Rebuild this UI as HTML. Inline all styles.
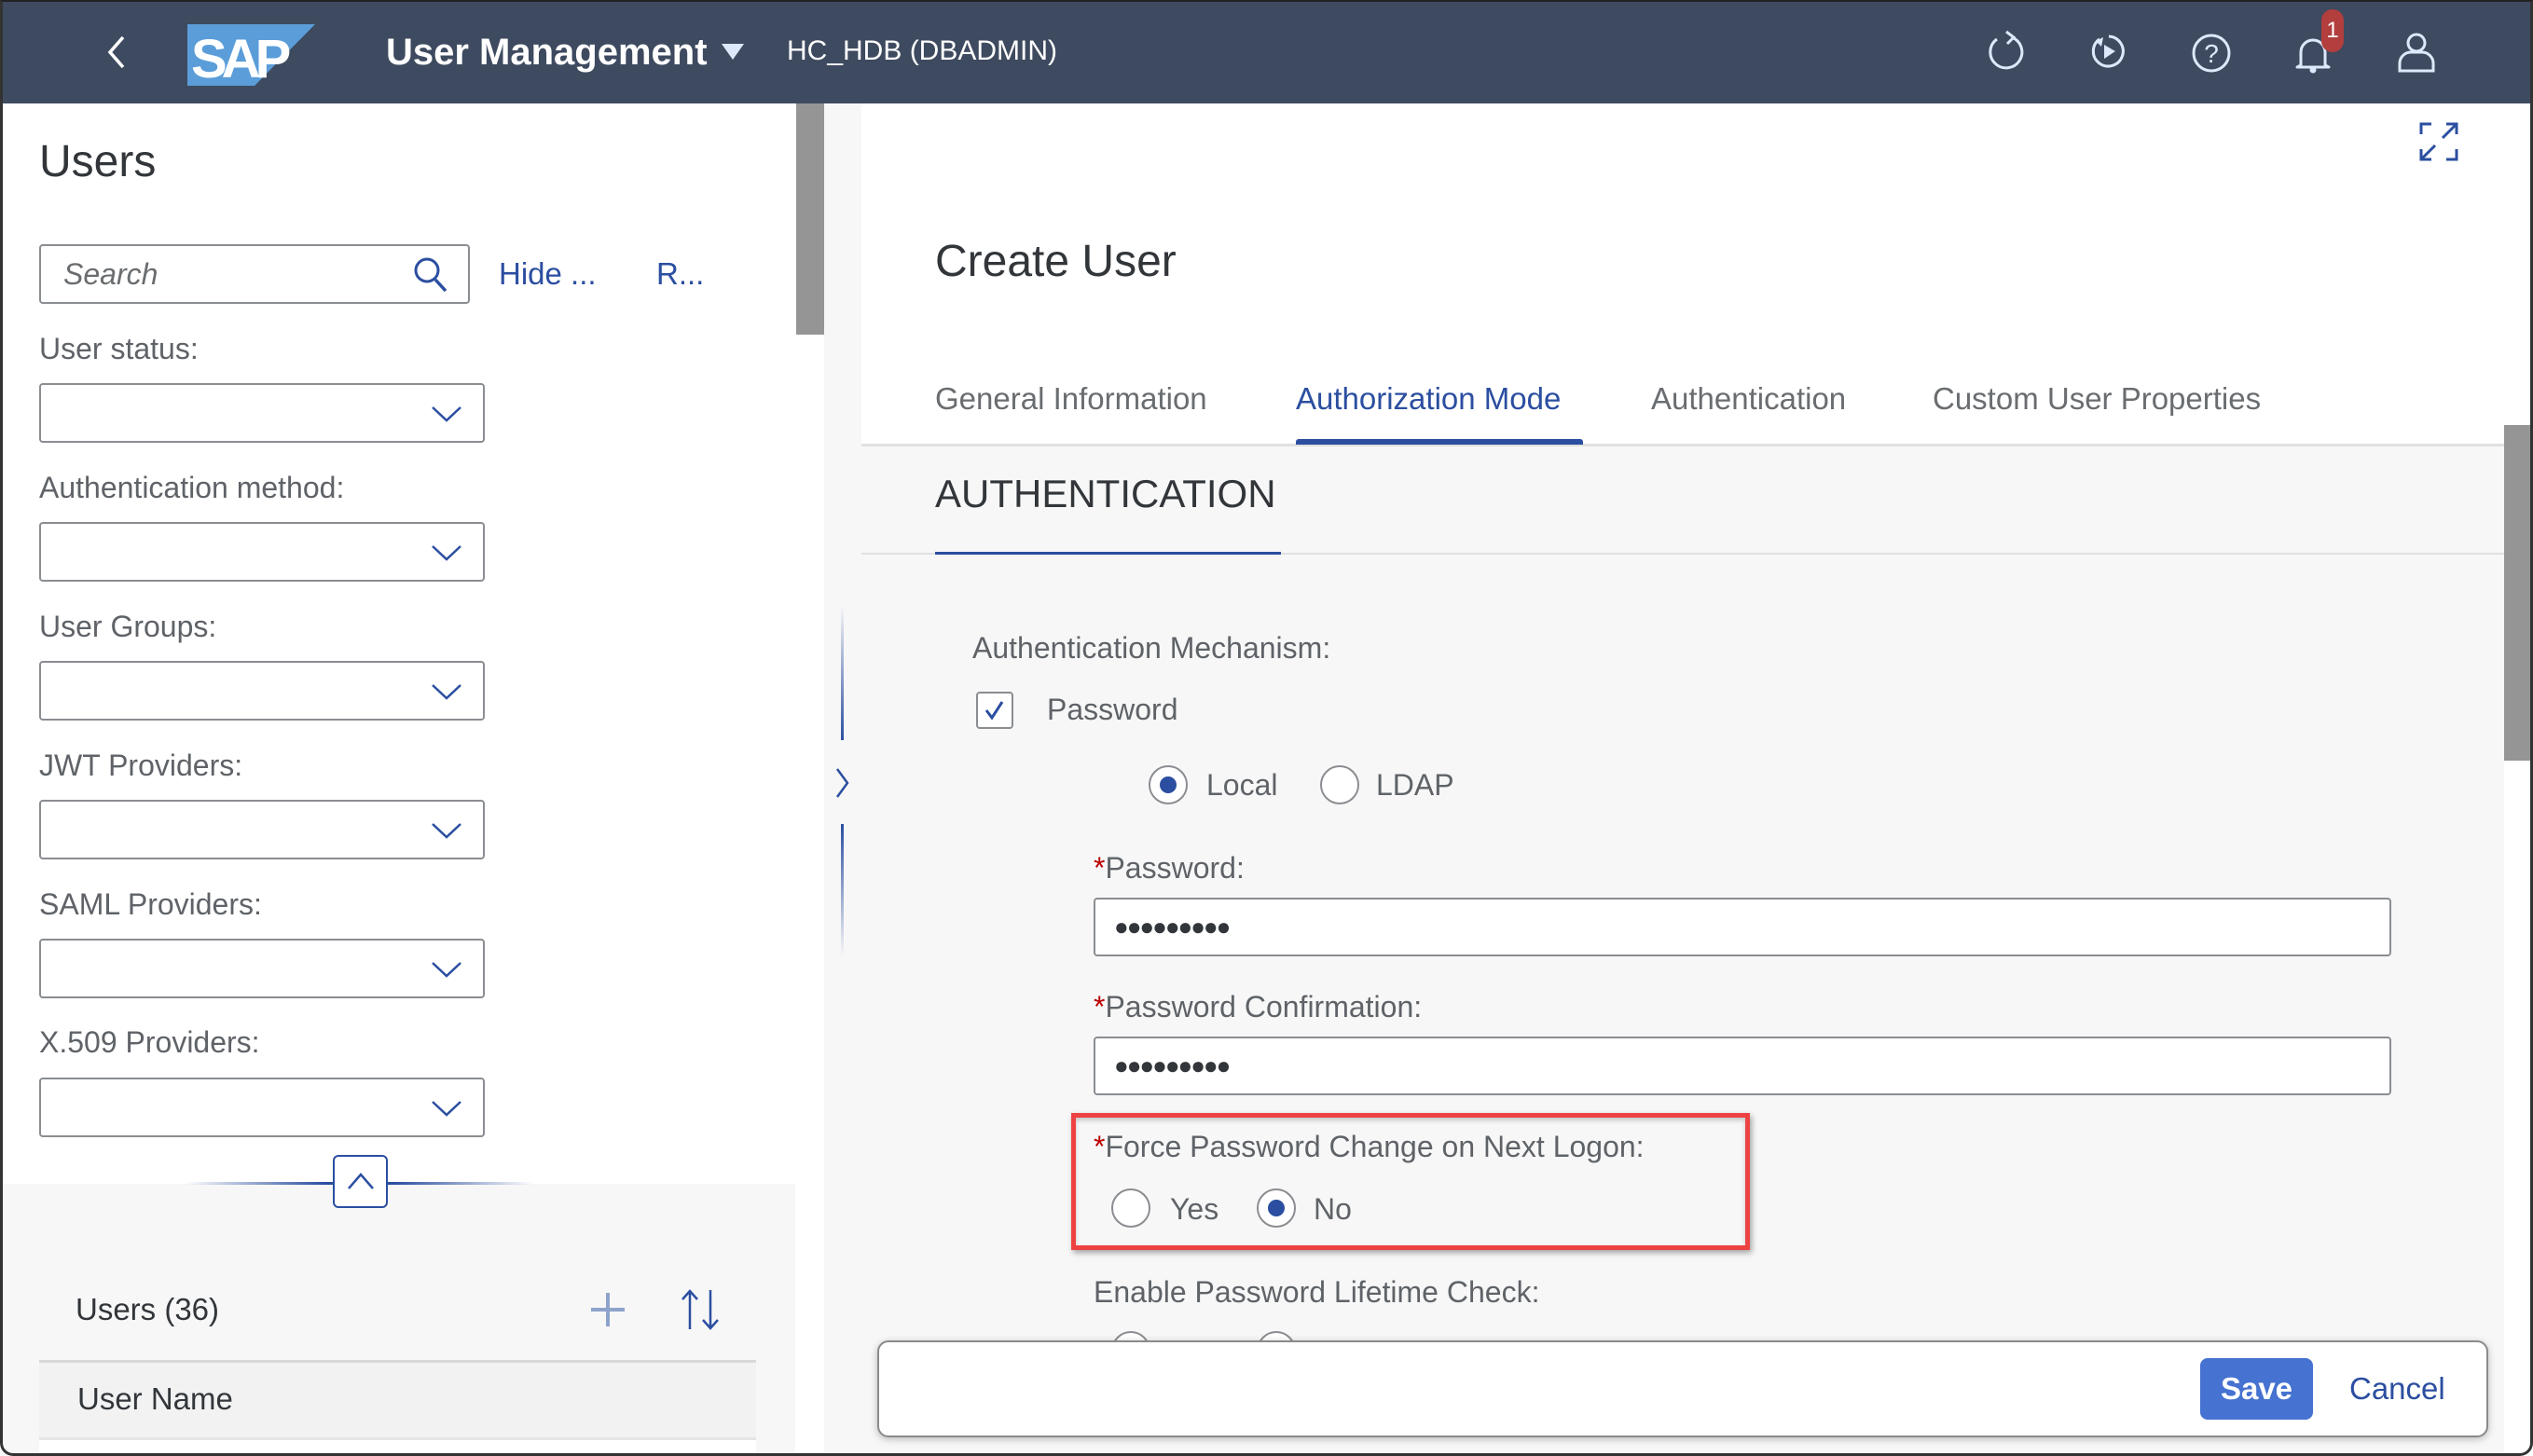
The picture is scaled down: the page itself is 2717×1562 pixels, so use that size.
<!DOCTYPE html>
<html><head><meta charset="utf-8"><style>
*{margin:0;padding:0;box-sizing:border-box}
body{width:2717px;height:1562px;position:relative;overflow:hidden;background:#fff;font-family:"Liberation Sans",sans-serif;color:#32363a}
.a{position:absolute;white-space:nowrap}
.lbl{font-size:32px;color:#5f6368;line-height:40px}
.sel{position:absolute;left:42px;width:478px;height:64px;border:2px solid #8a8d91;border-radius:4px;background:#fff}
.sel svg{position:absolute;right:22px;top:20px}
.inp{position:absolute;left:1173px;width:1392px;height:63px;border:2px solid #8a8d91;border-radius:4px;background:#fff}
.dots{position:absolute;left:20px;top:14px;font-size:26px;letter-spacing:-2px;color:#32363a}
.rad{position:absolute;width:42px;height:42px;border-radius:50%;border:2px solid #8a8d91;background:#fff}
.rad.on::after{content:"";position:absolute;left:10px;top:10px;width:18px;height:18px;border-radius:50%;background:#2b4ea0}
.req{color:#b00;}
</style></head><body>
<!-- header -->
<div class="a" style="left:0;top:0;width:2717px;height:111px;background:#3e4a5f"></div>
<svg class="a" style="left:110px;top:36px" width="30" height="40"><path d="M22 4 L8 20 L22 36" stroke="#fff" stroke-width="3.5" fill="none"/></svg>
<svg class="a" style="left:201px;top:26px" width="140" height="68"><polygon points="0,0 137,0 72,66 0,66" fill="#5b9dd9"/><text x="4" y="57" font-family="Liberation Sans" font-weight="bold" font-size="58" fill="#fff" letter-spacing="-6">SAP</text></svg>
<div class="a" style="left:414px;top:33px;font-size:40px;font-weight:bold;color:#fff;line-height:46px">User Management</div>
<svg class="a" style="left:774px;top:47px" width="26" height="20"><polygon points="0,0 24,0 12,17" fill="#dde8fb"/></svg>
<div class="a" style="left:844px;top:37px;font-size:30px;color:#fff;line-height:36px">HC_HDB (DBADMIN)</div>
<svg class="a" style="left:2128px;top:32px" width="46" height="46"><path d="M30 8 A17 17 0 1 1 14 10" stroke="#dde8fb" stroke-width="3" fill="none"/><path d="M24 2 L32 8 L25 15" stroke="#dde8fb" stroke-width="3" fill="none"/></svg>
<svg class="a" style="left:2238px;top:34px" width="46" height="46"><path d="M14 8 A16 16 0 1 0 24 5" stroke="#dde8fb" stroke-width="3" fill="none"/><polygon points="10,10 18,6 16,16" fill="#dde8fb"/><polygon points="19,14 31,21 19,29" fill="#dde8fb"/></svg>
<svg class="a" style="left:2349px;top:34px" width="46" height="46"><circle cx="23" cy="23" r="19" stroke="#dde8fb" stroke-width="3" fill="none"/><text x="23" y="33" text-anchor="middle" font-size="28" fill="#dde8fb" font-family="Liberation Sans">?</text></svg>
<svg class="a" style="left:2458px;top:34px" width="46" height="46"><path d="M10 36 L10 22 A13 13 0 0 1 36 22 L36 36 L40 38 L6 38 Z" stroke="#dde8fb" stroke-width="3" fill="none" stroke-linejoin="round"/><circle cx="23" cy="41" r="3.5" fill="#dde8fb"/></svg>
<div class="a" style="left:2490px;top:10px;width:24px;height:46px;border-radius:12px;background:#b33e3e;color:#fff;font-size:24px;text-align:center;line-height:46px">1</div>
<svg class="a" style="left:2570px;top:34px" width="44" height="46"><circle cx="22" cy="12" r="9" stroke="#dde8fb" stroke-width="3" fill="none"/><path d="M4 42 L4 34 A12 12 0 0 1 16 22 L28 22 A12 12 0 0 1 40 34 L40 42 Z" stroke="#dde8fb" stroke-width="3" fill="none"/></svg>

<!-- left panel -->
<div class="a" style="left:854px;top:111px;width:30px;height:248px;background:#959595"></div>
<div class="a" style="left:884px;top:111px;width:40px;height:1451px;background:#f7f7f7"></div>
<div class="a" style="left:42px;top:146px;font-size:48px;line-height:56px">Users</div>
<div class="a" style="left:42px;top:262px;width:462px;height:64px;border:2px solid #8a8d91;border-radius:4px"></div>
<div class="a" style="left:68px;top:274px;font-size:32px;font-style:italic;color:#6a6d70;line-height:40px">Search</div>
<svg class="a" style="left:442px;top:274px" width="40" height="42"><circle cx="16" cy="16" r="12" stroke="#2b4ea0" stroke-width="3" fill="none"/><path d="M25 26 L36 38" stroke="#2b4ea0" stroke-width="3.5"/></svg>
<div class="a" style="left:535px;top:274px;font-size:33px;color:#2b4ea0;line-height:40px">Hide ...</div>
<div class="a" style="left:704px;top:274px;font-size:33px;color:#2b4ea0;line-height:40px">R...</div>

<div class="a lbl" style="left:42px;top:354px">User status:</div>
<div class="sel" style="top:411px"><svg width="34" height="22"><path d="M2 4 L17 18 L32 4" stroke="#2b4ea0" stroke-width="2.5" fill="none"/></svg></div>
<div class="a lbl" style="left:42px;top:503px">Authentication method:</div>
<div class="sel" style="top:560px"><svg width="34" height="22"><path d="M2 4 L17 18 L32 4" stroke="#2b4ea0" stroke-width="2.5" fill="none"/></svg></div>
<div class="a lbl" style="left:42px;top:652px">User Groups:</div>
<div class="sel" style="top:709px"><svg width="34" height="22"><path d="M2 4 L17 18 L32 4" stroke="#2b4ea0" stroke-width="2.5" fill="none"/></svg></div>
<div class="a lbl" style="left:42px;top:801px">JWT Providers:</div>
<div class="sel" style="top:858px"><svg width="34" height="22"><path d="M2 4 L17 18 L32 4" stroke="#2b4ea0" stroke-width="2.5" fill="none"/></svg></div>
<div class="a lbl" style="left:42px;top:950px">SAML Providers:</div>
<div class="sel" style="top:1007px"><svg width="34" height="22"><path d="M2 4 L17 18 L32 4" stroke="#2b4ea0" stroke-width="2.5" fill="none"/></svg></div>
<div class="a lbl" style="left:42px;top:1098px">X.509 Providers:</div>
<div class="sel" style="top:1156px"><svg width="34" height="22"><path d="M2 4 L17 18 L32 4" stroke="#2b4ea0" stroke-width="2.5" fill="none"/></svg></div>

<div class="a" style="left:0;top:1270px;width:853px;height:292px;background:#f7f7f7"></div>
<div class="a" style="left:199px;top:1268px;width:373px;height:3px;background:linear-gradient(90deg,rgba(43,78,160,0),#2b4ea0 40%,#2b4ea0 60%,rgba(43,78,160,0))"></div>
<div class="a" style="left:357px;top:1239px;width:59px;height:57px;border:2px solid #2b4ea0;border-radius:6px;background:#fff"></div>
<svg class="a" style="left:372px;top:1255px" width="30" height="24"><path d="M2 20 L15 5 L28 20" stroke="#2b4ea0" stroke-width="2.5" fill="none"/></svg>
<div class="a" style="left:81px;top:1385px;font-size:33px;line-height:40px">Users (36)</div>
<svg class="a" style="left:632px;top:1385px" width="40" height="40"><path d="M20 2 V38 M2 20 H38" stroke="#8ea3cc" stroke-width="4"/></svg>
<svg class="a" style="left:728px;top:1382px" width="48" height="46"><path d="M12 44 V3 M4 12 L12 3 L20 12 M34 2 V43 M26 34 L34 43 L42 34" stroke="#2b4ea0" stroke-width="2.5" fill="none"/></svg>
<div class="a" style="left:42px;top:1459px;width:769px;height:3px;background:#d9d9d9"></div>
<div class="a" style="left:42px;top:1462px;width:769px;height:80px;background:#f2f2f2"></div>
<div class="a" style="left:83px;top:1481px;font-size:33px;line-height:40px">User Name</div>
<div class="a" style="left:42px;top:1542px;width:769px;height:3px;background:#e5e5e5"></div>
<div class="a" style="left:42px;top:1545px;width:769px;height:17px;background:#fff"></div>

<!-- right panel -->
<div class="a" style="left:924px;top:478px;width:1762px;height:1084px;background:#f7f7f7"></div>
<div class="a" style="left:2686px;top:111px;width:31px;height:1451px;background:#fff"></div>
<div class="a" style="left:2686px;top:456px;width:31px;height:360px;background:#959595"></div>
<svg class="a" style="left:2594px;top:130px" width="44" height="44"><path d="M3 14 V3 H14 M30 3 H41 V14 M41 30 V41 H30 M14 41 H3 V30 M26 18 L41 3 M18 26 L3 41 M30 3 L41 3 L41 14" stroke="#2b4ea0" stroke-width="3" fill="none"/></svg>
<div class="a" style="left:1003px;top:253px;font-size:48px;line-height:56px">Create User</div>
<div class="a" style="left:1003px;top:408px;font-size:33px;color:#6a6d70;line-height:40px">General Information</div>
<div class="a" style="left:1390px;top:408px;font-size:33px;color:#2b4ea0;line-height:40px">Authorization Mode</div>
<div class="a" style="left:1771px;top:408px;font-size:33px;color:#6a6d70;line-height:40px">Authentication</div>
<div class="a" style="left:2073px;top:408px;font-size:33px;color:#6a6d70;line-height:40px">Custom User Properties</div>
<div class="a" style="left:924px;top:476px;width:1762px;height:3px;background:#e0e0e0"></div>
<div class="a" style="left:1390px;top:471px;width:308px;height:6px;background:#2b4ea0;border-radius:3px 3px 0 0"></div>
<div class="a" style="left:1003px;top:506px;font-size:42px;line-height:48px;color:#32363a">AUTHENTICATION</div>
<div class="a" style="left:924px;top:593px;width:1762px;height:2px;background:#e0e0e0"></div>
<div class="a" style="left:1003px;top:592px;width:371px;height:3px;background:#2b4ea0"></div>

<div class="a" style="left:902px;top:650px;width:3px;height:144px;background:linear-gradient(#f7f7f7,#2b4ea0)"></div>
<div class="a" style="left:902px;top:884px;width:3px;height:142px;background:linear-gradient(#2b4ea0,#f7f7f7)"></div>
<svg class="a" style="left:894px;top:822px" width="20" height="36"><path d="M4 3 L15 18 L4 33" stroke="#2b4ea0" stroke-width="2.5" fill="none"/></svg>

<div class="a lbl" style="left:1043px;top:675px">Authentication Mechanism:</div>
<div class="a" style="left:1047px;top:742px;width:40px;height:40px;border:2px solid #8a8d91;border-radius:4px;background:#fff"></div>
<svg class="a" style="left:1053px;top:748px" width="28" height="28"><path d="M5 14 L11 22 L22 5" stroke="#2b4ea0" stroke-width="3" fill="none"/></svg>
<div class="a lbl" style="left:1123px;top:741px">Password</div>
<div class="rad on" style="left:1232px;top:821px"></div>
<div class="a lbl" style="left:1294px;top:822px">Local</div>
<div class="rad" style="left:1416px;top:821px"></div>
<div class="a lbl" style="left:1476px;top:822px">LDAP</div>

<div class="a lbl" style="left:1173px;top:911px"><span class="req">*</span>Password:</div>
<div class="inp" style="top:963px"><span class="dots">●●●●●●●●●</span></div>
<div class="a lbl" style="left:1173px;top:1060px"><span class="req">*</span>Password Confirmation:</div>
<div class="inp" style="top:1112px"><span class="dots">●●●●●●●●●</span></div>

<div class="a" style="left:1149px;top:1194px;width:728px;height:147px;border:5px solid #ee4242;box-shadow:2px 3px 6px rgba(0,0,0,.35), inset 0 3px 5px rgba(0,0,0,.2)"></div>
<div class="a lbl" style="left:1173px;top:1210px"><span class="req">*</span>Force Password Change on Next Logon:</div>
<div class="rad" style="left:1192px;top:1275px"></div>
<div class="a lbl" style="left:1255px;top:1277px">Yes</div>
<div class="rad on" style="left:1348px;top:1275px"></div>
<div class="a lbl" style="left:1409px;top:1277px">No</div>
<div class="a lbl" style="left:1173px;top:1366px">Enable Password Lifetime Check:</div>
<div class="rad" style="left:1192px;top:1428px"></div>
<div class="rad" style="left:1348px;top:1428px"></div>

<div class="a" style="left:941px;top:1438px;width:1728px;height:104px;background:#fff;border:2px solid #8a8a8a;border-radius:12px;box-shadow:0 2px 8px rgba(0,0,0,.25)"></div>
<div class="a" style="left:2360px;top:1457px;width:121px;height:66px;background:#4672d1;border-radius:8px;color:#fff;font-weight:bold;font-size:33px;text-align:center;line-height:66px">Save</div>
<div class="a" style="left:2520px;top:1470px;font-size:33px;color:#2b4ea0;line-height:40px">Cancel</div>

<!-- outer frame -->
<div class="a" style="left:0;top:0;width:2717px;height:1562px;border:3px solid #333;border-top:2px solid #222;border-radius:0 0 14px 14px;pointer-events:none"></div>
</body></html>
